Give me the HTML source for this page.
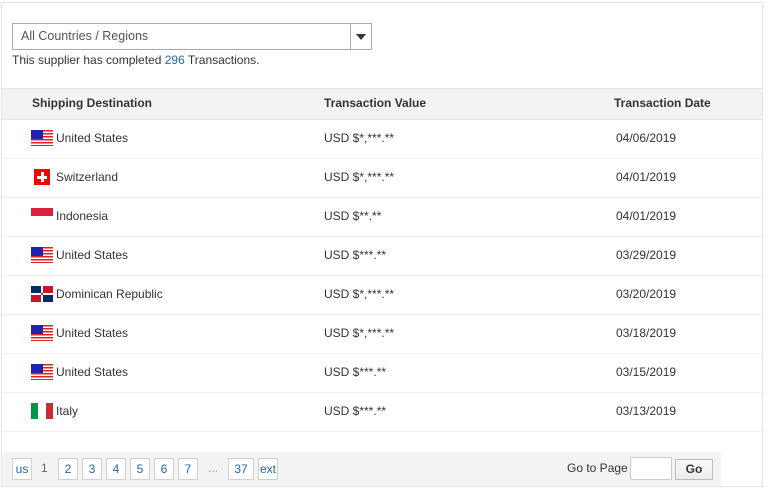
<!DOCTYPE html>
<html><head><meta charset="utf-8"><style>
*{margin:0;padding:0;box-sizing:border-box}
body{width:774px;height:496px;background:#fff;font-family:"Liberation Sans",Arial,sans-serif;font-size:12px;color:#333;position:relative;overflow:hidden}
.abs{position:absolute}
.frame{left:1px;top:2px;width:762px;height:485px;border:1px solid #e3e3e3}
.sel{left:12px;top:23px;width:360px;height:27px;border:1px solid #a9a9a9;color:#555;font-size:12.5px;line-height:25px;padding-left:8px}
.sel .btn{position:absolute;right:0;top:0;width:21px;height:25px;border-left:1px solid #a9a9a9}
.sel .btn:after{content:"";position:absolute;left:5px;top:10px;border-left:5px solid transparent;border-right:5px solid transparent;border-top:6px solid #333}
.hd{left:2px;top:88px;width:760px;height:32px;background:#f3f3f3;border-top:1px solid #e3e3e3;border-bottom:1px solid #e3e3e3;font-weight:bold;font-size:12px;color:#333}
.hd span{position:absolute;top:7px}
.row{left:2px;width:760px;height:39px;border-bottom:1px solid #efefef}
.row span{position:absolute;top:11px;font-size:12px;color:#333}
.flag{position:absolute}
.us{width:22px;height:16px;top:10px;left:29px;background:repeating-linear-gradient(#d22 0 1.5px,#fff 1.5px 3px)}
.us:before{content:"";position:absolute;left:0;top:0;width:12px;height:9px;background:#22a}
.pg{left:2px;top:452px;width:719px;height:34px;background:#f3f3f3}
.pb{position:absolute;top:6px;height:22px;border:1px solid #d0d0d0;background:#fff;color:#2a64a8;font-size:12px;text-align:center;line-height:20px}
</style></head><body>
<div class="abs frame"></div>
<div class="abs sel">All Countries / Regions<div class="btn"></div></div>
<div class="abs" style="left:12px;top:53px;font-size:12px;color:#333">This supplier has completed <span style="color:#2a64a8">296</span> Transactions.</div>
<div class="abs hd"><span style="left:30px">Shipping Destination</span><span style="left:322px">Transaction Value</span><span style="left:612px">Transaction Date</span></div>

<div class="abs row" style="top:120px"><div class="flag us"></div><span style="left:54px">United States</span><span style="left:322px">USD $*,***.**</span><span style="left:614px">04/06/2019</span></div>
<div class="abs row" style="top:159px"><div class="flag" style="left:32px;top:10px;width:16px;height:16px;background:#f00"><div style="position:absolute;left:6.5px;top:3px;width:3px;height:10px;background:#fff"></div><div style="position:absolute;left:3px;top:6.5px;width:10px;height:3px;background:#fff"></div></div><span style="left:54px">Switzerland</span><span style="left:322px">USD $*,***.**</span><span style="left:614px">04/01/2019</span></div>
<div class="abs row" style="top:198px"><div class="flag" style="left:29px;top:10px;width:22px;height:8px;background:#d8213b"></div><span style="left:54px">Indonesia</span><span style="left:322px">USD $**.**</span><span style="left:614px">04/01/2019</span></div>
<div class="abs row" style="top:237px"><div class="flag us"></div><span style="left:54px">United States</span><span style="left:322px">USD $***.**</span><span style="left:614px">03/29/2019</span></div>
<div class="abs row" style="top:276px"><div class="flag" style="left:29px;top:10px;width:22px;height:16px;background:#fff"><div style="position:absolute;left:0;top:0;width:10px;height:7px;background:#002d62"></div><div style="position:absolute;right:0;top:0;width:10px;height:7px;background:#ce1126"></div><div style="position:absolute;left:0;bottom:0;width:10px;height:7px;background:#ce1126"></div><div style="position:absolute;right:0;bottom:0;width:10px;height:7px;background:#002d62"></div><div style="position:absolute;left:10px;top:7px;width:2px;height:2px;background:#555"></div></div><span style="left:54px">Dominican Republic</span><span style="left:322px">USD $*,***.**</span><span style="left:614px">03/20/2019</span></div>
<div class="abs row" style="top:315px"><div class="flag us"></div><span style="left:54px">United States</span><span style="left:322px">USD $*,***.**</span><span style="left:614px">03/18/2019</span></div>
<div class="abs row" style="top:354px"><div class="flag us"></div><span style="left:54px">United States</span><span style="left:322px">USD $***.**</span><span style="left:614px">03/15/2019</span></div>
<div class="abs row" style="top:393px"><div class="flag" style="left:29px;top:10px;width:22px;height:16px;background:linear-gradient(90deg,#009246 0 7px,#fff 7px 15px,#ce2b37 15px)"></div><span style="left:54px">Italy</span><span style="left:322px">USD $***.**</span><span style="left:614px">03/13/2019</span></div>

<div class="abs pg">
<div class="pb" style="left:10px;width:20px">us</div>
<div style="position:absolute;left:39px;top:6px;color:#666;line-height:20px">1</div>
<div class="pb" style="left:56px;width:20px">2</div>
<div class="pb" style="left:80px;width:20px">3</div>
<div class="pb" style="left:104px;width:20px">4</div>
<div class="pb" style="left:128px;width:20px">5</div>
<div class="pb" style="left:152px;width:20px">6</div>
<div class="pb" style="left:176px;width:20px">7</div>
<div style="position:absolute;left:206px;top:6px;color:#999;line-height:20px">...</div>
<div class="pb" style="left:226px;width:26px">37</div>
<div class="pb" style="left:256px;width:20px">ext</div>
<div style="position:absolute;left:565px;top:7px;color:#333;line-height:18px">Go to Page</div>
<div style="position:absolute;left:628px;top:5px;width:42px;height:23px;border:1px solid #ccc;background:#fff"></div>
<div style="position:absolute;left:673px;top:7px;width:38px;height:21px;border:1px solid #bbb;background:linear-gradient(#fafafa,#ececec);text-align:center;line-height:19px;font-weight:bold;color:#333">Go</div>
</div>
</body></html>
